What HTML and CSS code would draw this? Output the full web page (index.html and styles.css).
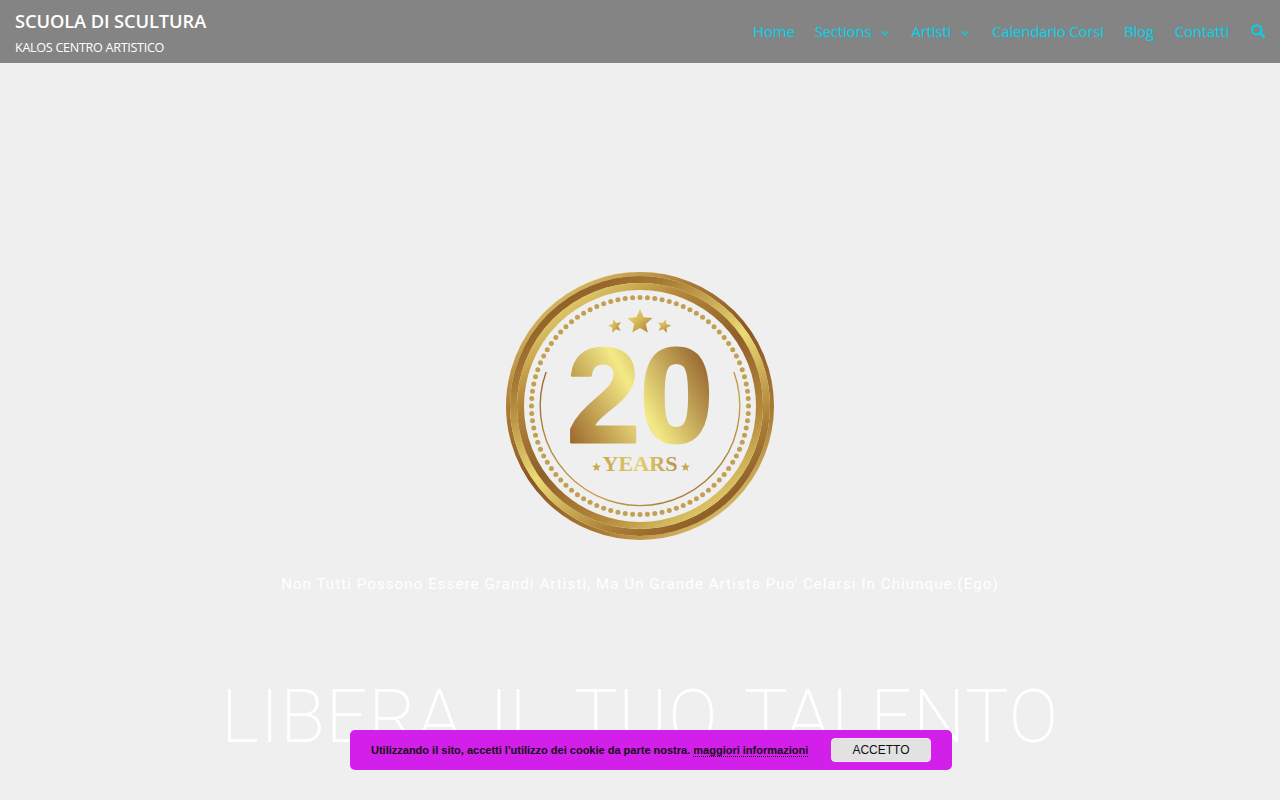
FILE: index.html
```html
<!DOCTYPE html>
<html lang="it">
<head>
<meta charset="utf-8">
<title>Scuola di Scultura</title>
<link rel="stylesheet" href="styles.css">
</head>
<body>
<header class="site-header">
  <div class="brand">
    <div class="brand-title">SCUOLA DI SCULTURA</div>
    <div class="brand-sub">KALOS CENTRO ARTISTICO</div>
  </div>
  <nav class="nav">
    <a class="nav-item">Home</a>
    <a class="nav-item nav-sections">Sections <svg class="chev" viewBox="0 0 10 6"><path d="M1.500 1.200 5 4.700l3.500-3.500" fill="none" stroke="currentColor" stroke-width="1.300"/></svg></a>
    <a class="nav-item nav-artisti">Artisti <svg class="chev" viewBox="0 0 10 6"><path d="M1.500 1.200 5 4.700l3.500-3.500" fill="none" stroke="currentColor" stroke-width="1.300"/></svg></a>
    <a class="nav-item">Calendario Corsi</a>
    <a class="nav-item nav-blog">Blog</a>
    <a class="nav-item">Contatti</a>
    <svg class="search" viewBox="0 0 14 14"><circle cx="5.800" cy="5.800" r="4.600" fill="none" stroke="currentColor" stroke-width="2"/><path d="M9.200 9.200 13 13" stroke="currentColor" stroke-width="2.400" stroke-linecap="round"/></svg>
  </nav>
</header>
<main class="hero">
  <svg class="medal" viewBox="0 0 268 268" id="medal">
    <defs>
      <linearGradient id="outer" x1=".15" y1="0" x2=".85" y2="1">
        <stop offset="0" stop-color="#e6cd70"/><stop offset=".28" stop-color="#a97a32"/><stop offset=".5" stop-color="#8a5723"/><stop offset=".75" stop-color="#a97a32"/><stop offset="1" stop-color="#e8d278"/>
      </linearGradient>
      <linearGradient id="mid" x1=".15" y1="0" x2=".85" y2="1">
        <stop offset="0" stop-color="#85521f"/><stop offset=".22" stop-color="#a97c34"/><stop offset=".5" stop-color="#ecdb74"/><stop offset=".78" stop-color="#a97c34"/><stop offset="1" stop-color="#7f4d1d"/>
      </linearGradient>
      <linearGradient id="inner" x1=".15" y1="0" x2=".85" y2="1">
        <stop offset="0" stop-color="#efe07a"/><stop offset=".25" stop-color="#b5883a"/><stop offset=".5" stop-color="#8f5f28"/><stop offset=".75" stop-color="#b5883a"/><stop offset="1" stop-color="#efe07a"/>
      </linearGradient>
      <linearGradient id="num" gradientUnits="userSpaceOnUse" x1="62" y1="172" x2="206" y2="92">
        <stop offset="0" stop-color="#9a642a"/><stop offset=".5" stop-color="#f3ea86"/><stop offset="1" stop-color="#93602a"/>
      </linearGradient>
      <linearGradient id="yrs" x1="0" y1="0" x2="1" y2="0">
        <stop offset="0" stop-color="#c9a650"/><stop offset=".5" stop-color="#e4cf6c"/><stop offset="1" stop-color="#b8934a"/>
      </linearGradient>
      <linearGradient id="arc" x1="0" y1="0" x2="1" y2="1">
        <stop offset="0" stop-color="#9a6a30"/><stop offset=".6" stop-color="#c9a24f"/><stop offset="1" stop-color="#8f5f28"/>
      </linearGradient>
      <linearGradient id="star" x1="0" y1="0" x2="1" y2="1">
        <stop offset="0" stop-color="#f0df7a"/><stop offset=".5" stop-color="#d4b456"/><stop offset="1" stop-color="#a8772f"/>
      </linearGradient>
    </defs>
    <circle class="ring" cx="134" cy="134" r="132" stroke="url(#outer)" stroke-width="4"/>
    <circle class="ring" cx="134" cy="134" r="126.500" stroke="url(#mid)" stroke-width="7"/>
    <circle class="ring" cx="134" cy="134" r="119.500" stroke="url(#inner)" stroke-width="7"/>
    <g id="dots" fill="#c2a050"></g>
    <path d="M40.100 100.000A99.800 99.800 0 1 0 227.900 100.000" fill="none" stroke="url(#arc)" stroke-width="1.400"/>
    <path fill="url(#star)" d="M134 37l3.600 8.200 8.900.8-6.700 5.900 2 8.700-7.800-4.600-7.800 4.600 2-8.700-6.700-5.900 8.900-.8z"/>
    <path fill="url(#star)" transform="rotate(-14 109 54)" d="M109 47l1.900 4.500 4.900.4-3.700 3.200 1.100 4.800-4.200-2.500-4.200 2.500 1.100-4.800-3.700-3.200 4.900-.4z"/>
    <path fill="url(#star)" transform="rotate(14 158 54)" d="M158 47l1.900 4.500 4.900.4-3.700 3.200 1.100 4.800-4.200-2.500-4.200 2.500 1.100-4.800-3.700-3.200 4.900-.4z"/>
    <text class="medal-num" x="134" y="170" text-anchor="middle" textLength="146" lengthAdjust="spacingAndGlyphs" fill="url(#num)" stroke="url(#num)">20</text>
    <text class="medal-yrs" x="134" y="199" text-anchor="middle" textLength="75" lengthAdjust="spacingAndGlyphs" fill="url(#yrs)">YEARS</text>
    <path fill="#c9a650" d="M90.500 190.500l1.200 3 3.200.2-2.500 2 .8 3.200-2.700-1.700-2.700 1.700.8-3.200-2.500-2 3.200-.2z"/>
    <path fill="#c9a650" d="M179.500 190.500l1.200 3 3.200.2-2.500 2 .8 3.200-2.700-1.700-2.700 1.700.8-3.200-2.500-2 3.200-.2z"/>
  </svg>
  <p class="tagline">Non Tutti Possono Essere Grandi Artisti, Ma Un Grande Artista Puo' Celarsi In Chiunque.(Ego)</p>
  <h1 class="headline">LIBERA IL TUO TALENTO</h1>
</main>
<aside class="cookie">
  <span class="cookie-text">Utilizzando il sito, accetti l'utilizzo dei cookie da parte nostra. <a class="cookie-link">maggiori informazioni</a></span>
  <button class="cookie-btn">ACCETTO</button>
</aside>
<script src="medal.js"></script>
</body>
</html>
```
FILE: medal.js
```js
var g = document.getElementById('dots'), s = '';
for (var i = 0; i < 92; i++) {
  var a = i * Math.PI / 46;
  s += '<circle cx="' + (134 + 108.5 * Math.cos(a)).toFixed(2) + '" cy="' + (134 + 108.5 * Math.sin(a)).toFixed(2) + '" r="2.500"/>';
}
g.innerHTML = s;
```
FILE: styles.css
```css
* { box-sizing: border-box; }
html, body { margin: 0; height: 100%; overflow: hidden; }
body { background: #efefef; font-family: "Open Sans", sans-serif; height: 800px; display: flex; flex-direction: column; position: relative; }
.site-header { height: 63px; background: #848484; display: flex; justify-content: space-between; align-items: center; padding: 0 15px; flex: none; }
.brand { color: #fff; margin-top: 1px; }
.brand-title { font-size: 18.300px; font-weight: 600; line-height: 24px; letter-spacing: -.1px; }
.brand-sub { font-size: 12.600px; line-height: 16px; margin-top: 7px; letter-spacing: -.3px; }
.nav { display: flex; align-items: center; gap: 20px; color: #00d4ea; font-size: 15px; margin-top: -1px; }
.nav-item { display: flex; align-items: center; gap: 9px; letter-spacing: -.2px; font-weight: 500; }
.nav-sections { margin-right: 1px; }
.nav-artisti { margin-right: 2px; }
.nav-blog { margin-right: 1px; }
.chev { width: 10px; height: 6px; margin-top: 3px; }
.search { width: 14px; height: 14px; margin-left: 2px; }
.hero { flex: 1; display: flex; flex-direction: column; align-items: center; padding-top: 209px; }
.medal { width: 268px; height: 268px; flex: none; }
.ring { fill: none; }
.medal-num { font-family: "Liberation Sans", sans-serif; font-weight: 700; font-size: 134px; stroke-width: 3px; stroke-linejoin: round; }
.medal-yrs { font-family: "Liberation Serif", serif; font-weight: 700; font-size: 20px; }
.tagline { margin: 34px 0 0; color: #fff; font-family: Roboto, sans-serif; font-size: 15px; font-weight: 400; line-height: 20px; letter-spacing: 1.1px; }
.headline { margin: 81px 0 0; color: #fff; font-family: Roboto, sans-serif; font-weight: 200; font-size: 73.500px; line-height: 84px; letter-spacing: .9px; word-spacing: 8px; white-space: nowrap; }
.cookie { position: absolute; left: 350px; top: 730px; width: 602px; height: 40px; background: #d31fea; border-radius: 5px; display: flex; align-items: center; padding: 0 21px; justify-content: space-between; }
.cookie-text { font-family: "Liberation Sans", sans-serif; font-size: 11px; font-weight: 700; color: #111; margin-top: -1px; }
.cookie-link { border-bottom: 1px dotted #111; }
.cookie-btn { width: 100px; height: 24px; background: #e2e2e2; border: 1px solid #f0e6f0; border-radius: 4px; font-family: "Liberation Sans", sans-serif; font-size: 12px; color: #111; padding: 0; }
```
